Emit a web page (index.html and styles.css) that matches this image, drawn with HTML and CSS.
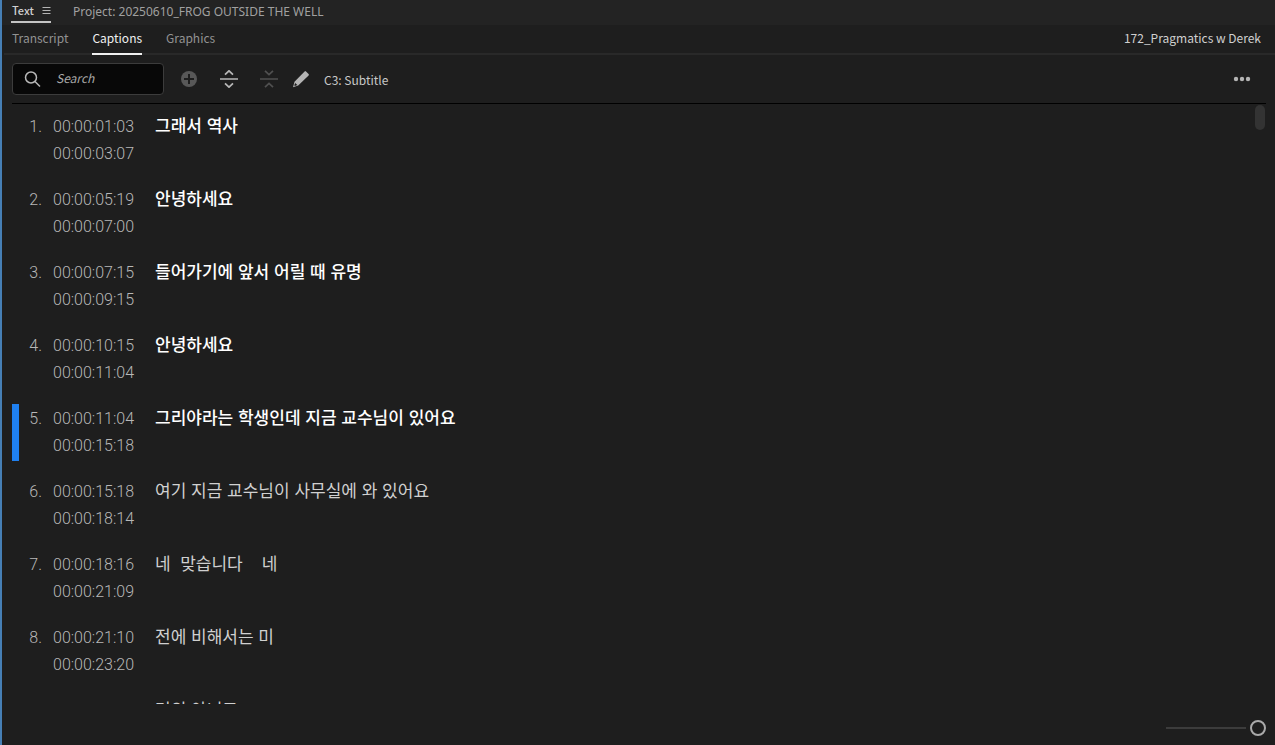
FILE: index.html
```html
<!DOCTYPE html>
<html lang="en">
<head>
<meta charset="utf-8">
<title>Text panel – Captions</title>
<link rel="stylesheet" href="styles.css">
</head>
<body>
<div class="panel">
  <header class="panel-tabs">
    <div class="panel-tab panel-tab-active">
      <span>Text</span>
      <button class="icon-button" aria-label="Panel menu"><svg width="9" height="9" viewBox="0 0 9 9"><path d="M0.5 1.5h8M0.5 4.5h8M0.5 7.5h8" stroke="#b4b4b4" fill="none"/></svg></button>
    </div>
    <div class="panel-tab">Project: 20250610_FROG OUTSIDE THE WELL</div>
  </header>
  <nav class="views">
    <a class="view" href="#transcript">Transcript</a>
    <a class="view view-active" href="#captions">Captions</a>
    <a class="view" href="#graphics">Graphics</a>
    <span class="sequence">172_Pragmatics w Derek</span>
  </nav>
  <div class="toolbar">
    <label class="search">
      <svg width="18" height="18" viewBox="0 0 18 18" fill="none" stroke="#b8b8b8" stroke-width="1.5"><circle cx="7" cy="7.5" r="5.5"/><path d="M11 11.5l5 5"/></svg>
      <input class="search-input" type="text" placeholder="Search" aria-label="Search">
    </label>
    <div class="tools">
      <button class="icon-button" aria-label="Add caption"><svg width="18" height="18" viewBox="0 0 18 18"><circle cx="9" cy="9" r="8" fill="#585858"/><path d="M9 4v10M4 9h10" stroke="#1e1e1e" stroke-width="2"/></svg></button>
      <button class="icon-button" aria-label="Split caption"><svg width="18" height="18" viewBox="0 0 18 18" fill="none" stroke="#b8b8b8" stroke-width="1.7"><path d="M0 9h18M5 4.6l4-3.8 4 3.8M5 13.4l4 3.8 4-3.8"/></svg></button>
      <button class="icon-button" aria-label="Merge captions"><svg width="18" height="18" viewBox="0 0 18 18" fill="none" stroke="#505050" stroke-width="1.7"><path d="M0 9h18M5 .8l4 3.8 4-3.8M5 17.2l4-3.8 4 3.8"/></svg></button>
    </div>
    <button class="track"><svg width="18" height="18" viewBox="0 0 18 18"><path d="M12.6 1.4q.7-.7 1.4 0l2.6 2.6q.7.7 0 1.4L6.2 15.5 1 17.3l1.5-5.5z" fill="#b4b4b4"/><path d="M3.2 12.9l2.1 2.1-2.4.9-.6-.6z" fill="#1e1e1e"/></svg><span>C3: Subtitle</span></button>
    <button class="icon-button more" aria-label="More options"><svg width="18" height="6" viewBox="0 0 18 6" fill="#b4b4b4"><circle cx="3" cy="3" r="2.2"/><circle cx="9" cy="3" r="2.2"/><circle cx="15" cy="3" r="2.2"/></svg></button>
  </div>
  <main class="caption-area">
    <ol class="captions">
      <li class="caption reviewed"><span class="number">1.</span><div class="times"><time>00:00:01:03</time><time>00:00:03:07</time></div><p class="words" lang="ko">그래서 역사</p></li>
      <li class="caption reviewed"><span class="number">2.</span><div class="times"><time>00:00:05:19</time><time>00:00:07:00</time></div><p class="words" lang="ko">안녕하세요</p></li>
      <li class="caption reviewed"><span class="number">3.</span><div class="times"><time>00:00:07:15</time><time>00:00:09:15</time></div><p class="words" lang="ko">들어가기에 앞서 어릴 때 유명</p></li>
      <li class="caption reviewed"><span class="number">4.</span><div class="times"><time>00:00:10:15</time><time>00:00:11:04</time></div><p class="words" lang="ko">안녕하세요</p></li>
      <li class="caption reviewed current"><span class="number">5.</span><div class="times"><time>00:00:11:04</time><time>00:00:15:18</time></div><p class="words" lang="ko">그리야라는 학생인데 지금 교수님이 있어요</p></li>
      <li class="caption"><span class="number">6.</span><div class="times"><time>00:00:15:18</time><time>00:00:18:14</time></div><p class="words" lang="ko">여기 지금 교수님이 사무실에 와 있어요</p></li>
      <li class="caption"><span class="number">7.</span><div class="times"><time>00:00:18:16</time><time>00:00:21:09</time></div><p class="words" lang="ko">네  맞습니다    네</p></li>
      <li class="caption"><span class="number">8.</span><div class="times"><time>00:00:21:10</time><time>00:00:23:20</time></div><p class="words" lang="ko">전에 비해서는 미</p></li>
      <li class="caption"><span class="number">9.</span><div class="times"><time>00:00:23:20</time></div><p class="words" lang="ko">거의 아니고</p></li>
    </ol>
    <div class="scrollbar"><div class="scroll-thumb"></div></div>
  </main>
  <footer class="footer"><input class="zoom" type="range" min="0" max="100" value="100" aria-label="Text size"></footer>
</div>
</body>
</html>
```
FILE: styles.css
```css
* { box-sizing: border-box; }
body {
  margin: 0;
  background: #1e1e1e;
  color: #b4b4b4;
  font-family: "Noto Sans CJK KR", sans-serif;
  font-size: 12px;
}
button {
  padding: 0;
  border: 0;
  background: none;
  color: inherit;
  font: inherit;
}
svg { display: block; }
.panel {
  display: flex;
  flex-direction: column;
  height: 100vh;
  border-left: 2px solid #467fb5;
}
.panel-tabs {
  display: flex;
  gap: 22px;
  height: 25px;
  padding-left: 9px;
  background: #232323;
}
.panel-tab {
  height: 23px;
  color: #a0a0a0;
  font-family: "Noto Sans", sans-serif;
  line-height: 23px;
}
.panel-tab-active {
  display: flex;
  align-items: center;
  justify-content: space-between;
  width: 40px;
  padding-left: 1px;
  border-bottom: 2px solid #c4c4c4;
  color: #d0d0d0;
  font-family: "Noto Sans CJK KR", sans-serif;
  font-size: 11px;
  font-weight: 500;
}
.views {
  display: flex;
  gap: 24px;
  height: 30px;
  margin-left: 2px;
  padding: 0 14px 0 8px;
  border-bottom: 2px solid #292929;
  line-height: 26px;
}
.view {
  height: 30px;
  color: #929292;
  text-decoration: none;
}
.view-active {
  border-bottom: 2px solid #f0f0f0;
  color: #f0f0f0;
}
.sequence {
  margin-left: auto;
  color: #d0d0d0;
}
.toolbar {
  display: flex;
  align-items: center;
  height: 49px;
  margin: 0 9px 0 10px;
  padding: 0 15px 0 0;
  border-bottom: 1px solid #000;
}
.search {
  display: flex;
  align-items: center;
  gap: 14px;
  width: 152px;
  height: 32px;
  padding: 0 11px;
  border: 1px solid #3c3c3c;
  border-radius: 4px;
  background: #080808;
}
.search svg { flex: none; }
.search-input {
  width: 100%;
  min-width: 0;
  padding: 0 0 4px;
  border: 0;
  outline: 0;
  background: none;
  color: #d0d0d0;
  font: 12px "Noto Sans CJK KR", sans-serif;
}
.search-input::placeholder {
  color: #a8a8a8;
  font-style: italic;
}
.tools {
  display: flex;
  gap: 22px;
  margin: 0 14px 0 16px;
}
.track {
  display: flex;
  align-items: center;
  gap: 14px;
  color: #c8c8c8;
}
.more { margin-left: auto; }
.caption-area {
  display: flex;
  flex: 1;
  min-height: 0;
  margin: 0 9px 0 10px;
}
.captions {
  display: flex;
  flex: 1;
  flex-direction: column;
  gap: 16px;
  min-height: 0;
  margin: 0;
  padding: 8px 0 0;
  overflow: hidden;
  list-style: none;
}
.caption {
  display: flex;
  flex: none;
  height: 57px;
  border-left: 7px solid transparent;
  color: #b8b8b8;
  font-family: Roboto, sans-serif;
  font-size: 16px;
  font-weight: 300;
  line-height: 27px;
}
.current { border-color: #1f80f0; }
.number {
  width: 23px;
  margin-right: 11px;
  padding-top: 1px;
  text-align: right;
}
.times {
  display: flex;
  flex-direction: column;
  width: 102px;
  padding-top: 1px;
}
.words {
  margin: 0;
  color: #d0d0d0;
  font-family: "Noto Sans CJK KR", sans-serif;
  font-size: 17px;
  font-weight: 400;
  line-height: 25px;
  white-space: pre;
}
.reviewed .words {
  color: #fff;
  font-weight: 500;
}
.scrollbar {
  width: 11px;
  padding-top: 1px;
}
.scroll-thumb {
  width: 10px;
  height: 25px;
  border-radius: 5px;
  background: #333;
}
.footer {
  display: flex;
  align-items: center;
  justify-content: flex-end;
  height: 41px;
  padding: 6px 9px 0 0;
}
.zoom {
  width: 100px;
  height: 16px;
  margin: 0;
  appearance: none;
  background: linear-gradient(#3c3c3c, #3c3c3c) left center / 80px 2px no-repeat;
}
.zoom::-webkit-slider-thumb {
  width: 16px;
  height: 16px;
  appearance: none;
  border: 2px solid #aaa;
  border-radius: 50%;
  background: #1e1e1e;
}
```
